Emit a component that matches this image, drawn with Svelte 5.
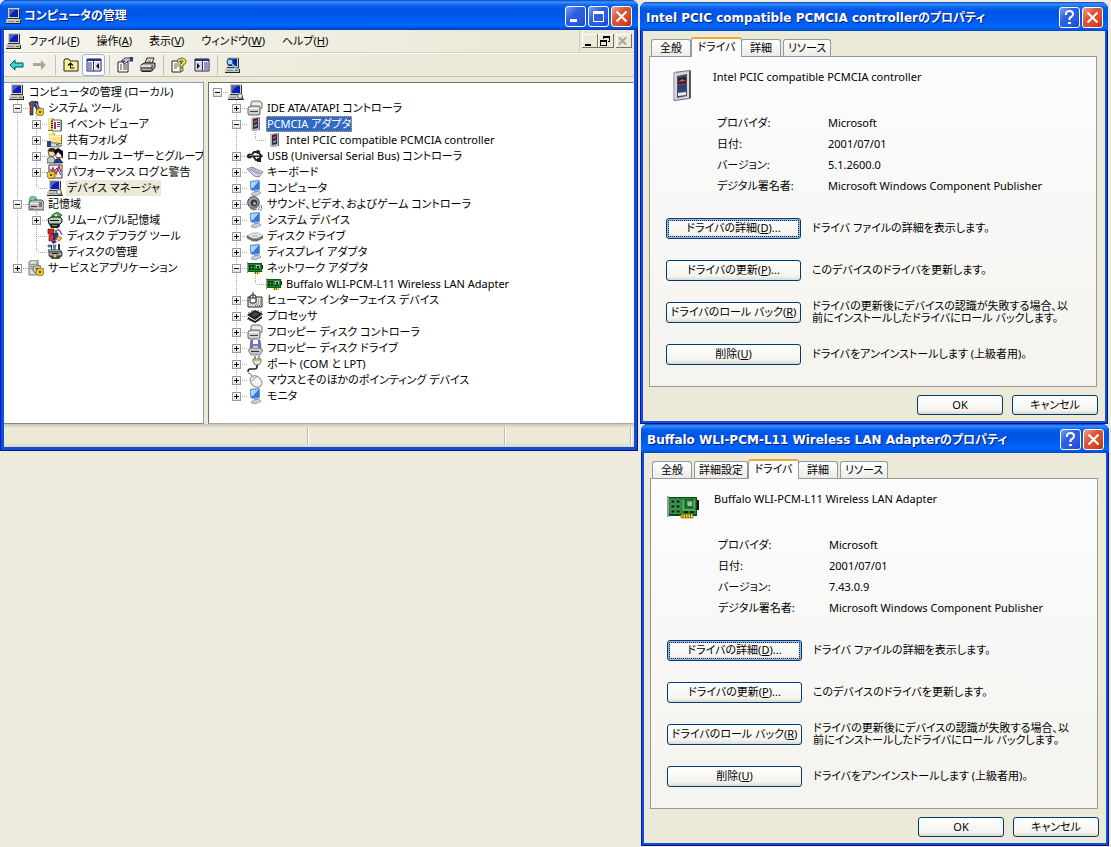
<script>
  // 16x16 glyphs, keyed by name
  const monitor = (x = 0) =>
    `<g transform="translate(${x} 0)"><path d="M2 0h11l1 1v9H2z" fill="#d4d0c8"/><path d="M13 1h1v9h-1z" fill="#333"/><path d="M3 1h9v8H3z" fill="#777"/><path d="M4 2h8v7H4z" fill="#0a1fb4"/><path d="M4 2h5L4 7z" fill="#3c62e8"/><path d="M2 10h12v1H2z" fill="#333"/><path d="M1 11h13l1 1v4H0v-4z" fill="#c9c6bc"/><path d="M0 15h15v1H0zM14 12h1v4h-1z" fill="#222"/><path d="M2 13h6v1H2z" fill="#888"/><path d="M10 13h3v1h-3z" fill="#18a018"/></g>`;
  const gear = (x, y, c = '#f2cf2f') =>
    `<g transform="translate(${x} ${y})"><path d="M3 0h2v1h1l1-1 1 2-1 1v1h1v2H7l-1 2-2-1-2 1-1-2H0V4l1-1-1-1 1-1h2z" fill="${c}" stroke="#5a4a00" stroke-width=".6"/><circle cx="4" cy="4" r="1.2" fill="#5a4a00"/></g>`;
  const folder =
    '<path d="M1 2h5l1 2h8v11H1z" fill="#8a7420"/><path d="M1 2h4l1 2h8v10H1z" fill="#f8e387"/><path d="M2 5h12v1H2z" fill="#fff8c8"/>';
  const blueMon =
    '<path d="M3 1l9-1 1 1v9L5 11 3 9z" fill="#7c8fb0"/><path d="M4 2l8-1v8l-7 1z" fill="#2a7de0"/><path d="M4 2l8-1-6 7H4z" fill="#9ed8ff"/><path d="M7 11l4-1v3H7z" fill="#9aa6c0"/><path d="M4 14l3-2 5-1 2 2-3 2-5 1z" fill="#c6cddc" stroke="#6c7894" stroke-width=".6"/>';
  const card =
    '<path d="M5 2l8-1v13l-8 1z" fill="#6d7076"/><path d="M4 2l2-1v13l-2 1z" fill="#c8cad0"/><path d="M5 2l7-1v13l-7 1z" fill="#b0b4be"/><path d="M6 3l5-1v10l-5 1z" fill="#2c2c40"/><path d="M7 5l3-1v2l-3 1z" fill="#e0402c"/><path d="M7 9l3-1v2l-3 1z" fill="#8a90b8"/>';
  const drives =
    '<path d="M4 3l1-2h8l2 2v5l-2 1H4z" fill="#dedede" stroke="#666" stroke-width=".9"/><path d="M5 4h9" stroke="#fff"/><path d="M1 8l2-2h9l1 2v6l-1 1H2l-1-1z" fill="#cfcfcf" stroke="#555" stroke-width=".9"/><path d="M2 8h10v1H2z" fill="#fff"/><path d="M3 11h8v1H3z" fill="#444"/>';
  const nic =
    '<path d="M0 3h15v9H0z" fill="#0b5a1c"/><path d="M1 4h13v7H1z" fill="#1f8a34"/><path d="M2 5h2v2H2zM5 5h2v2H5zM2 8h2v2H2zM5 8h2v2H5z" fill="#032a0a"/><path d="M9 5h4v3H9z" fill="#8fc79a"/><path d="M10 6h2v2h-2zM8 9h5v1H8z" fill="#032a0a"/><path d="M0 2h1v11H0z" fill="#9a9a9a"/><path d="M7 12h6v2H7z" fill="#f0d83c"/><path d="M8 12h1v2H8zM10 12h1v2h-1z" fill="#7a6400"/><path d="M15 5h1v4h-1z" fill="#222"/>';

  const icons = {
    computer: monitor(),
    computerScan: monitor() + '<circle cx="12" cy="12" r="2.4" fill="#dff3ff" stroke="#666"/><path d="M14 14l2 2" stroke="#555" stroke-width="1.4"/>',
    tools:
      '<path d="M1 3l3-2 3 1-1 2 1 2-2 1v8H2V6z" fill="#555" stroke="#111" stroke-width=".6"/><path d="M3 5h1v9H3z" fill="#c33"/><path d="M7 1l3 1v3l4 8-3 2-4-9z" fill="#2e3a78" stroke="#111" stroke-width=".6"/><path d="M8 3l4 9" stroke="#8fb4f0"/>' + gear(8, 8),
    event:
      folder + '<path d="M5 4h9v11H5z" fill="#fff" stroke="#444" stroke-width=".8"/><path d="M4 5h2v1H4zM4 7h2v1H4zM4 9h2v1H4zM4 11h2v1H4z" fill="#333"/><path d="M7 6h2v7H7z" fill="#d62828"/><path d="M10 6h3v1h-3zM10 8h3v1h-3zM10 10h3v1h-3z" fill="#3448c4"/>',
    share:
      '<path d="M2 1h5l1 2h7v9H2z" fill="#8a7420"/><path d="M2 1h4l1 2h7v8H2z" fill="#f8e387"/><path d="M3 4h11v1H3z" fill="#fff8c8"/><path d="M0 10h3l3 1h5l1 1-3 1h6l-2 2H5l-2-1H0z" fill="#d8d4c8" stroke="#333" stroke-width=".6"/><path d="M0 9h4v6H0z" fill="#1a44a0"/>',
    users:
      '<path d="M1 2l3-2 4 1v5L6 9 2 8z" fill="#f0d9a0" stroke="#222" stroke-width=".7"/><path d="M1 3l2-3 5 1-1 2-3 1z" fill="#3a2a12"/><path d="M0 15V11l4-3 4 3v4z" fill="#b9cdb8" stroke="#222" stroke-width=".7"/><path d="M8 3l4-2 3 3v5l-3 2-3-2z" fill="#fff" stroke="#111" stroke-width=".7"/><path d="M6 3l5-3 5 3v8l-2-4-3-3-2 3z" fill="#0b0b14"/><path d="M7 15l2-4h4l3 4z" fill="#1f3da8" stroke="#111" stroke-width=".6"/><path d="M10 9h3v1h-3z" fill="#d22"/>',
    perf:
      '<path d="M2 1h13v13H2z" fill="#fff" stroke="#333"/><path d="M2 4h13M2 7h13M2 10h13M6 1v13M10 1v13" stroke="#c4c4c4" stroke-width=".6"/><path d="M3 11l3-7 3 6 3-8 2 6" fill="none" stroke="#d42020" stroke-width="1.3"/><path d="M3 5l4 3 3-4 4 7" fill="none" stroke="#2338b8"/>' + gear(0, 7),
    storage:
      '<circle cx="5" cy="4" r="3.8" fill="#6fd08a" stroke="#4b6"/><circle cx="5" cy="4" r="1.2" fill="#fff"/><path d="M1 6l3-2h10l2 2v8H1z" fill="#bfbfbf" stroke="#333" stroke-width=".8"/><path d="M2 7h12v1H2z" fill="#eee"/><path d="M3 10h6v1H3z" fill="#333"/><path d="M11 6h3v5h-3z" fill="#777"/><path d="M3 12h2v1H3z" fill="#1b1"/>',
    removable:
      '<path d="M5 3l5-3 5 3-4 4H5z" fill="#3fae58" stroke="#143" stroke-width=".7"/><circle cx="9" cy="3.6" r="1.3" fill="#e8f7a8"/><path d="M1 7l3-2h9l2 2v3l-2 2H2z" fill="#b8c8b8" stroke="#111"/><path d="M3 8h9v1H3z" fill="#111"/><path d="M2 12h11v2l-2 2H4z" fill="#222"/><path d="M5 13h5v1H5z" fill="#48c060"/>',
    defrag:
      '<path d="M1 1h6v5H1z" fill="#d42828" stroke="#400" stroke-width=".6"/><path d="M8 2h2v4H8z" fill="#28a83c"/><path d="M10 1l3 2 2 4" fill="none" stroke="#b048c8" stroke-width="1.6"/><path d="M2 7l5-1v6l-5 1z" fill="#e03434" stroke="#400" stroke-width=".6"/><path d="M7 6l4-1v5l-4 2z" fill="#2540c8" stroke="#004" stroke-width=".6"/><path d="M11 8l4 2-3 3-3-2z" fill="#f0c428" stroke="#540" stroke-width=".6"/><path d="M4 13l4-1 2 2-4 2z" fill="#6a1a78"/>',
    disk:
      '<path d="M4 1h1v5H4zM11 0h2v6h-2z" fill="#333"/><path d="M1 1h3v2H1zM6 1h3l-1 5H7z" fill="#4aa6d8" stroke="#224" stroke-width=".5"/><path d="M1 6h12l2 2H2z" fill="#eee" stroke="#222" stroke-width=".8"/><path d="M2 8h13v4H2z" fill="#a8a8a8" stroke="#222" stroke-width=".8"/><path d="M5 9h6v1H5z" fill="#222"/><path d="M2 12l3 3h7l3-3z" fill="#444"/><circle cx="8" cy="12" r="1.5" fill="#d8c838"/>',
    services:
      '<path d="M1 2l3-2h6v13l-2 2H1z" fill="#dcd9cf" stroke="#555" stroke-width=".8"/><path d="M2 4h5v1H2zM2 6h5v1H2zM2 8h5v1H2z" fill="#888"/><path d="M8 2l2-2v13l-2 2z" fill="#a7a498"/>' + gear(5, 5, '#c9c9c9') + gear(8, 8),
    drives,
    card,
    usb: '<path d="M1 8h12M4 8l3-4h4M6 8l3 4h2" fill="none" stroke="#222" stroke-width="2"/><circle cx="2.5" cy="8" r="2.5" fill="#222"/><path d="M12 4l4 4-4 4z" fill="#222"/><circle cx="11" cy="4" r="2" fill="#222"/><path d="M10 10h4v4h-4z" fill="#222"/><path d="M2 7.5h11" stroke="#aaa" stroke-width=".7"/>',
    keyboard:
      '<path d="M0 5l5-2 11 5-4 5-5-1z" fill="#d9d9ea" stroke="#6c6c8c" stroke-width=".8"/><path d="M2 5l10 5M4 4.500l10 5M3 7l4-3M5.500 8.500l4-3M8 10l4-3M10.500 11l3-3" stroke="#8888a8" stroke-width=".7"/>',
    blueMon,
    sound:
      '<circle cx="6.500" cy="6.500" r="5.800" fill="#a4a4a8" stroke="#333"/><circle cx="7" cy="7" r="3.400" fill="#3a3a3e"/><circle cx="7.500" cy="7.500" r="1.300" fill="#c8c8cc"/><path d="M12 10q1 2-1 4M14 9q2 4-1 6" fill="none" stroke="#4a7ad8"/><path d="M3 12l4 2 3-1" fill="none" stroke="#666"/>',
    hdd: '<path d="M0 8l6-3h5l5 3-6 3H6z" fill="#f0f0f0" stroke="#888" stroke-width=".7"/><path d="M0 8l6 3h4l6-3v2l-6 3H6l-6-3z" fill="#77777b" stroke="#555" stroke-width=".7"/><ellipse cx="8" cy="8" rx="3.500" ry="1.300" fill="#c4c4c8"/><path d="M12 10h2v1h-2z" fill="#2c2"/>',
    nic,
    hid: '<path d="M1 5h14v10H1z" fill="#e8e4d8" stroke="#222"/><path d="M7 8h7M7 10h7M3 12h11M8 13.500h5" stroke="#555" stroke-width=".9" stroke-dasharray="1 1"/><path d="M4 3h4l1 2v5l-1 1H4l-1-1V5z" fill="#fff" stroke="#222"/><path d="M6 0v6M3 6h6" stroke="#222" fill="none"/>',
    cpu: '<path d="M0 7l8-5 8 4-8 6z" fill="#222"/><path d="M1 9l7 4 7-5v2l-7 5-7-4z" fill="#111"/><path d="M4 7l4-3 4 2-4 3z" fill="#4a4a4e"/><path d="M1 10v2M3 11v2M5 12v2M10 12v2M12 11v2M14 9v2M2 4v2M5 2v2M11 2v2M14 3v2" stroke="#333" stroke-width=".9"/>',
    floppy:
      '<path d="M4 0h9l1 9H3z" fill="#6a78c0" stroke="#334" stroke-width=".6"/><path d="M6 0h5v4H6z" fill="#fff"/><path d="M6 6h5v3H6z" fill="#dde"/><path d="M1 10l3-2h9l3 2-3 5H4z" fill="#c4c4cc" stroke="#666" stroke-width=".7"/><path d="M4 11h8v1H4z" fill="#333"/>',
    port: '<path d="M8 0v3M12 0v3" stroke="#333"/><path d="M6 3h8v3l-2 3H8L6 6z" fill="#e4e4dc" stroke="#555" stroke-width=".8"/><path d="M10 9v2q0 2-3 2H3q-2 0-2 3" fill="none" stroke="#222" stroke-width="1.500"/><path d="M7 4h6v1H7z" fill="#d8c820"/>',
    mouse:
      '<path d="M1 1q3 0 4 3" fill="none" stroke="#777"/><ellipse cx="9" cy="9.500" rx="6.500" ry="5" fill="#f4f4f4" stroke="#888" transform="rotate(40 9 9.500)"/><path d="M4 9q4-1 6-5M7 6l-2-2" fill="none" stroke="#999"/>',
    back: '<path d="M1 8l5-5v3h8v4H6v3z" fill="#2fdcdc" stroke="#04484c"/>',
    forward: '<path d="M14 8L9 3v3H1v3h8v4z" fill="#aca899"/>',
    up: '<path d="M1 3l1-1h4l1 2h8v10H1z" fill="#fbf39a" stroke="#222"/><path d="M7.500 6v5h4M5 8.500L7.500 6 10 8.500" fill="none" stroke="#111" stroke-width="1.200"/>',
    treePane:
      '<path d="M1 2h14v12H1z" fill="#fff" stroke="#1a1a50"/><path d="M1 2h14v2H1z" fill="#2b2b80"/><path d="M2 6h4M2 8h4M2 10h4M2 12h4" stroke="#2b2b80"/><path d="M7 4h1v10H7z" fill="#2b2b80"/><path d="M9 5h5v8H9z" fill="#d8d8e8"/><path d="M13 6v6l-3-3z" fill="#111"/>',
    props:
      '<path d="M1 5h10v10H1z" fill="#fff" stroke="#222"/><path d="M3 8h2M6 8h4M3 10h2M6 10h4M3 12h2M6 12h4" stroke="#444"/><path d="M4 4l4-3 5 0 0-1h3v4h-3l-2 0-3 3-2-1 2-2-2 0z" fill="#c4c8d8" stroke="#222" stroke-width=".8"/><path d="M13 0h3v4h-3z" fill="#2b3c90"/>',
    print:
      '<path d="M5 6l2-5h7l-2 5z" fill="#fff" stroke="#222"/><path d="M7.500 3h4M7 4.500h4" stroke="#777" stroke-width=".8"/><path d="M1 8l3-2h11v4l-3 4H1z" fill="#aaa" stroke="#222"/><path d="M1 8h11v2H1z" fill="#ddd"/><path d="M2 11h10M12 8v5" stroke="#333"/><path d="M2 14h9v1H2z" fill="#222"/>',
    help: '<path d="M1 4h9v11H1z" fill="#fff" stroke="#222"/><path d="M3 7h5M3 9h5M3 11h3" stroke="#666"/><path d="M6 5Q6 1 10 1q5 0 5 4 0 2-3 3v2H9V7q3-1 3-2.500Q12 3 10.500 3 9 3 9 5z" fill="#f7ec32" stroke="#444" stroke-width=".8"/><path d="M9 11h3v3H9z" fill="#f7ec32" stroke="#444" stroke-width=".8"/>',
    pane: '<path d="M1 2h14v12H1z" fill="#fff" stroke="#1a1a50"/><path d="M1 2h14v2H1z" fill="#2b2b80"/><path d="M2 5h6v8H2z" fill="#d8d8e8"/><path d="M3 6v6l3-3z" fill="#111"/><path d="M8 4h1v10H8z" fill="#2b2b80"/><path d="M10 6h4M10 8h4M10 10h4M10 12h4" stroke="#2b2b80"/>',
    refresh:
      monitor() + '<circle cx="5" cy="5" r="3" fill="#8fe0f4" stroke="#235"/><path d="M7 7l6 6" stroke="#5cc4e4" stroke-width="2"/>'
  };

  // 32x32 pictures of the device pages
  const art = {
    card: '<path d="M8 3l16-2 1 1v27l-2 1L9 32l-2-1V5z" fill="#6b6e75"/><path d="M7 4l3-1v27l-3 1z" fill="#b9bcc4"/><path d="M9 4l14-2v27L9 31z" fill="#d3d6dc"/><path d="M11 7l10-2v22l-10 2z" fill="#4c4c66"/><path d="M12 9l8-1v6l-8 1z" fill="#231f2c"/><path d="M12 13l4-3 4 2z" fill="#f2543a"/><path d="M12 16l8-1v7l-8 1z" fill="#34406e"/><path d="M12 24l8-1v3l-8 1z" fill="#eceef6"/><path d="M23 2h2v27l-2 1z" fill="#55575c"/>',
    nic: '<path d="M1 6h29v19H1z" fill="#0a4a16"/><path d="M2 7h27v16H2z" fill="#1f8434"/><path d="M0 5h2v21H0z" fill="#9c9c9c"/><path d="M4 9h4v3H4zM9 9h4v3H9zM4 14h4v3H4zM9 14h4v3H9zM4 19h4v3H4zM9 19h4v3H9z" fill="#06200a" stroke="#7fbf8a" stroke-width=".6"/><path d="M19 9h7v7h-7z" fill="#5aa068" stroke="#0a3a14"/><path d="M21 11h4v4h-4z" fill="#a9b8ac"/><path d="M16 9v10M27 9v8M16 19h12" stroke="#84cf90"/><path d="M17 20h4v2h-4zM23 20h4v2h-4z" fill="#06200a"/><path d="M30 9h2v10h-2z" fill="#111"/><path d="M14 23h12v4H14z" fill="#f4dc3c" stroke="#6a5800" stroke-width=".6"/><path d="M16 23v4M18.500 23v4M21 23v4M23.500 23v4" stroke="#6a5800"/>'
  };

  // rails: one entry per ancestor column, 1 where a connecting line passes, 0 where it is blank
  const consoleTree = [
    { label: 'コンピュータの管理 (ローカル)', icon: 'computer', root: true },
    { label: 'システム ツール', icon: 'tools', rails: [], mark: '-' },
    { label: 'イベント ビューア', icon: 'event', rails: [1], mark: '+' },
    { label: '共有フォルダ', icon: 'share', rails: [1], mark: '+' },
    { label: 'ローカル ユーザーとグループ', icon: 'users', rails: [1], mark: '+' },
    { label: 'パフォーマンス ログと警告', icon: 'perf', rails: [1], mark: '+' },
    { label: 'デバイス マネージャ', icon: 'computerScan', rails: [1], last: true, state: 'dim' },
    { label: '記憶域', icon: 'storage', rails: [], mark: '-' },
    { label: 'リムーバブル記憶域', icon: 'removable', rails: [1], mark: '+' },
    { label: 'ディスク デフラグ ツール', icon: 'defrag', rails: [1] },
    { label: 'ディスクの管理', icon: 'disk', rails: [1], last: true },
    { label: 'サービスとアプリケーション', icon: 'services', rails: [], mark: '+', last: true }
  ];

  const deviceTree = [
    { label: '', icon: 'computerScan', rails: [], mark: '-', only: true },
    { label: 'IDE ATA/ATAPI コントローラ', icon: 'drives', rails: [0], mark: '+' },
    { label: 'PCMCIA アダプタ', icon: 'card', rails: [0], mark: '-', state: 'selected' },
    { label: 'Intel PCIC compatible PCMCIA controller', icon: 'card', rails: [0, 1], last: true },
    { label: 'USB (Universal Serial Bus) コントローラ', icon: 'usb', rails: [0], mark: '+' },
    { label: 'キーボード', icon: 'keyboard', rails: [0], mark: '+' },
    { label: 'コンピュータ', icon: 'blueMon', rails: [0], mark: '+' },
    { label: 'サウンド、ビデオ、およびゲーム コントローラ', icon: 'sound', rails: [0], mark: '+' },
    { label: 'システム デバイス', icon: 'blueMon', rails: [0], mark: '+' },
    { label: 'ディスク ドライブ', icon: 'hdd', rails: [0], mark: '+' },
    { label: 'ディスプレイ アダプタ', icon: 'blueMon', rails: [0], mark: '+' },
    { label: 'ネットワーク アダプタ', icon: 'nic', rails: [0], mark: '-' },
    { label: 'Buffalo WLI-PCM-L11 Wireless LAN Adapter', icon: 'nic', rails: [0, 1], last: true },
    { label: 'ヒューマン インターフェイス デバイス', icon: 'hid', rails: [0], mark: '+' },
    { label: 'プロセッサ', icon: 'cpu', rails: [0], mark: '+' },
    { label: 'フロッピー ディスク コントローラ', icon: 'drives', rails: [0], mark: '+' },
    { label: 'フロッピー ディスク ドライブ', icon: 'floppy', rails: [0], mark: '+' },
    { label: 'ポート (COM と LPT)', icon: 'port', rails: [0], mark: '+' },
    { label: 'マウスとそのほかのポインティング デバイス', icon: 'mouse', rails: [0], mark: '+' },
    { label: 'モニタ', icon: 'blueMon', rails: [0], mark: '+', last: true }
  ];

  const menus = [
    ['ファイル', 'F'],
    ['操作', 'A'],
    ['表示', 'V'],
    ['ウィンドウ', 'W'],
    ['ヘルプ', 'H']
  ];

  const tools = [
    { icon: 'back', name: '戻る' },
    { icon: 'forward', name: '進む', off: true },
    null,
    { icon: 'up', name: '1 つ上のレベルへ' },
    { icon: 'treePane', name: 'コンソール ツリーの表示/非表示', on: true },
    null,
    { icon: 'props', name: 'プロパティ' },
    { icon: 'print', name: '印刷' },
    null,
    { icon: 'help', name: 'ヘルプ' },
    { icon: 'pane', name: '操作ウィンドウの表示/非表示' },
    null,
    { icon: 'refresh', name: 'ハードウェア変更のスキャン' }
  ];

  const actions = [
    { text: 'ドライバの詳細', key: 'D', more: '...', note: 'ドライバ ファイルの詳細を表示します。', focus: true },
    { text: 'ドライバの更新', key: 'P', more: '...', note: 'このデバイスのドライバを更新します。' },
    { text: 'ドライバのロール バック', key: 'R', more: '', note: 'ドライバの更新後にデバイスの認識が失敗する場合、以前にインストールしたドライバにロール バックします。' },
    { text: '削除', key: 'U', more: '', note: 'ドライバをアンインストールします (上級者用)。' }
  ];

  const dialogs = [
    { device: 'Intel PCIC compatible PCMCIA controller', art: 'card', version: '5.1.2600.0', tabs: ['全般', 'ドライバ', '詳細', 'リソース'] },
    { device: 'Buffalo WLI-PCM-L11 Wireless LAN Adapter', art: 'nic', version: '7.43.0.9', tabs: ['全般', '詳細設定', 'ドライバ', '詳細', 'リソース'] }
  ];
</script>

{#snippet icon(name)}
  <svg class="icon" viewBox="0 0 16 16" aria-hidden="true">{@html icons[name]}</svg>
{/snippet}

{#snippet accel(text, key, more = '')}{text}(<u>{key}</u>){more}{/snippet}

{#snippet caption(kind)}
  <button class="cap {kind}" aria-label={kind}>
    <svg viewBox="0 0 19 19" aria-hidden="true">
      {#if kind === 'minimize'}
        <path d="M4 12h7v3H4z" fill="#fff" />
      {:else if kind === 'maximize'}
        <path d="M4 4h11v11H4zM5 7v7h9V7z" fill="#fff" fill-rule="evenodd" />
      {:else if kind === 'help'}
        <path d="M6 7V6q0-3 3.500-3T13 6q0 2-2 3t-1.500 3" fill="none" stroke="#fff" stroke-width="2" />
        <path d="M8 14h3v2H8z" fill="#fff" />
      {:else}
        <path d="M4.500 4.500l10 10M14.500 4.500l-10 10" stroke="#fff" stroke-width="2.200" />
      {/if}
    </svg>
  </button>
{/snippet}

{#snippet tree(rows, label)}
  <ul class="tree" role="tree" aria-label={label}>
    {#each rows as row}
      <li role="treeitem" aria-selected={!!row.state}>
        {#if !row.root}
          {#each row.rails as rail}
            <span class="cell" class:rail={rail === 1}></span>
          {/each}
          <span class="cell branch" class:last={row.last} class:only={row.only}>
            {#if row.mark}
              <button class="mark" class:plus={row.mark === '+'} aria-label={row.mark === '+' ? '展開' : '折りたたみ'}></button>
            {/if}
          </span>
        {/if}
        {@render icon(row.icon)}
        {#if row.label}<span class="label {row.state ?? ''}">{row.label}</span>{/if}
      </li>
    {/each}
  </ul>
{/snippet}

<main class="desktop">
  <section class="window" aria-label="コンピュータの管理">
    <header class="titlebar">
      {@render icon('computer')}
      <h1>コンピュータの管理</h1>
      {@render caption('minimize')}
      {@render caption('maximize')}
      {@render caption('close')}
    </header>

    <div class="client">
      <nav class="menubar">
        {@render icon('computer')}
        {#each menus as [text, key]}
          <button class="menu">{@render accel(text, key)}</button>
        {/each}
        <div class="mdi">
          <button aria-label="最小化"><svg viewBox="0 0 14 13"><path d="M3 9h6v2H3z" fill="#000" /></svg></button>
          <button aria-label="元に戻す"><svg viewBox="0 0 14 13"><path d="M5 1h7v6h-2V6h1V3H6v1H5zM2 5h7v6H2zM3 7v3h5V7z" fill="#000" fill-rule="evenodd" /></svg></button>
          <button class="apart" aria-label="閉じる"><svg viewBox="0 0 14 13"><path d="M3 2.500l7 7M10 2.500l-7 7" stroke="#aca899" stroke-width="2" /></svg></button>
        </div>
      </nav>

      <div class="toolbar" role="toolbar">
        {#each tools as tool}
          {#if tool}
            <button class="tool" class:on={tool.on} disabled={tool.off} aria-label={tool.name}>{@render icon(tool.icon)}</button>
          {:else}
            <span class="sep"></span>
          {/if}
        {/each}
      </div>

      <div class="panes">
        <div class="pane side">{@render tree(consoleTree, 'コンソール')}</div>
        <div class="pane sunken">{@render tree(deviceTree, 'デバイス')}</div>
      </div>

      <footer class="status"><span class="wide"></span><span class="mid"></span><span class="small"></span></footer>
    </div>
  </section>

  <div class="stack">
    {#each dialogs as dialog}
      <section class="dialog" aria-label={dialog.device}>
        <header class="titlebar">
          <h2>{dialog.device}のプロパティ</h2>
          {@render caption('help')}
          {@render caption('close')}
        </header>
        <div class="body">
          <div class="tabs" role="tablist">
            {#each dialog.tabs as tab}
              <button class="tab" role="tab" aria-selected={tab === 'ドライバ'}>{tab}</button>
            {/each}
          </div>
          <div class="sheet" role="tabpanel">
            <div class="device">
              <svg class="art" viewBox="0 0 32 32" aria-hidden="true">{@html art[dialog.art]}</svg>
              <span>{dialog.device}</span>
            </div>
            <dl>
              <dt>プロバイダ:</dt><dd>Microsoft</dd>
              <dt>日付:</dt><dd>2001/07/01</dd>
              <dt>バージョン:</dt><dd>{dialog.version}</dd>
              <dt>デジタル署名者:</dt><dd>Microsoft Windows Component Publisher</dd>
            </dl>
            <div class="actions">
              {#each actions as action}
                <button class="push" class:focus={action.focus}>{@render accel(action.text, action.key, action.more)}</button>
                <p>{action.note}</p>
              {/each}
            </div>
          </div>
          <div class="confirm">
            <button class="push">OK</button>
            <button class="push">キャンセル</button>
          </div>
        </div>
      </section>
    {/each}
  </div>
</main>

<style>
  :global(body) {
    margin: 0;
    background: #efebdc;
  }
  .desktop {
    display: grid;
    grid-template-columns: minmax(0, 1fr) 469px;
    gap: 2px;
    align-items: start;
    padding-right: 2px;
    font: 11px/16px 'Noto Sans', 'Noto Sans CJK JP', sans-serif;
    font-feature-settings: 'palt';
    color: #000;
  }
  button {
    margin: 0;
    padding: 0;
    border: 0;
    background: none;
    font: inherit;
    font-feature-settings: inherit;
    color: inherit;
    white-space: nowrap;
  }
  svg {
    display: block;
  }
  .icon {
    flex: none;
    width: 16px;
    height: 16px;
  }

  .titlebar {
    display: flex;
    align-items: center;
    gap: 2px;
    box-sizing: border-box;
    height: 30px;
    padding: 2px 6px 0 6px;
    border-radius: 7px 7px 0 0;
    background: linear-gradient(#0842b8 0, #3b92ff 2px, #0a66f0 5px, #0054e3 9px, #0058ea 16px, #0066ff 25px, #0050d8 28px, #0038b0 30px);
    color: #fff;
    text-shadow: 1px 1px #0a1e6e;
  }
  .titlebar h1,
  .titlebar h2 {
    flex: 1;
    margin: 0;
    overflow: hidden;
    white-space: nowrap;
    font-family: 'DejaVu Sans', 'Noto Sans CJK JP', sans-serif;
    font-size: 12px;
    line-height: 18px;
    font-weight: bold;
  }
  .cap {
    flex: none;
    box-sizing: border-box;
    width: 21px;
    height: 21px;
    border: 1px solid #fff;
    border-radius: 3px;
    background: linear-gradient(135deg, #7a9ff2, #2e5ee0 40%, #2a5be8 70%, #1c45c4);
  }
  .cap.close {
    background: linear-gradient(135deg, #f0a08a, #dd5433 40%, #d8492a 70%, #b5300f);
  }

  .window,
  .dialog {
    background: #0f4fd8;
    border-radius: 7px 7px 0 0;
  }
  .client {
    margin: 0 4px;
    background: #ece9d8;
  }
  .window {
    padding-bottom: 4px;
    box-shadow: inset 1px 0 #0019cf, inset -1px -1px #00138c;
  }
  .menubar {
    display: flex;
    align-items: center;
    height: 22px;
    padding-left: 2px;
    background: linear-gradient(90deg, #f6f5ee, #ece9d8 80%);
    border-bottom: 1px solid #d4d0bf;
  }
  .menu {
    margin-right: 9px;
    padding: 0 4px;
  }
  .icon + .menu {
    margin-left: 3px;
  }
  .mdi {
    display: flex;
    align-items: center;
    align-self: stretch;
    margin-left: auto;
    padding: 0 2px;
    border-left: 1px solid #d0ccbb;
  }
  .mdi button {
    width: 16px;
    height: 14px;
    background: #ece9d8;
    box-shadow: inset -1px -1px #716f64, inset 1px 1px #fff;
  }
  .mdi .apart {
    margin-left: 2px;
  }
  .mdi svg {
    width: 14px;
    height: 13px;
  }
  .toolbar {
    display: flex;
    align-items: center;
    height: 22px;
    padding-left: 1px;
    border-top: 1px solid #fff;
    border-bottom: 1px solid #c8c4b2;
    background: linear-gradient(90deg, #f4f3ec, #ece9d8 60%);
  }
  .tool {
    display: grid;
    place-items: center;
    width: 23px;
    height: 22px;
  }
  .tool.on {
    box-sizing: border-box;
    border: 1px solid #98b5e2;
    border-radius: 3px;
    background: #fff;
  }
  .sep {
    width: 1px;
    height: 20px;
    margin: 0 3px 0 4px;
    background: #c5c2b2;
  }
  .panes {
    display: grid;
    grid-template-columns: 200px minmax(0, 1fr);
    gap: 4px;
    padding-top: 5px;
  }
  .pane {
    overflow: hidden;
    background: #fff;
    border: 1px solid #7f9db9;
    border-bottom-color: #85898c;
  }
  .side {
    padding-left: 5px;
    border-left: 0;
  }
  .sunken {
    border-color: #716f64 #f4f2e8 #aca899 #716f64;
  }

  .tree {
    margin: 0;
    padding: 1px 0 19px;
    list-style: none;
  }
  .tree li {
    display: flex;
    align-items: center;
    height: 16px;
  }
  .cell {
    flex: none;
    display: grid;
    align-items: center;
    box-sizing: border-box;
    width: 19px;
    height: 16px;
    padding-left: 4px;
    --dots: repeating-linear-gradient(#aca899 0 1px, transparent 1px 2px);
    --dash: repeating-linear-gradient(90deg, #aca899 0 1px, transparent 1px 2px);
  }
  .rail {
    background: var(--dots) 8px 0 / 1px 100% no-repeat;
  }
  .branch {
    background: var(--dots) 8px 0 / 1px 100% no-repeat, var(--dash) 10px 8px / 9px 1px no-repeat;
  }
  .branch.last {
    background-size: 1px 8px, 9px 1px;
  }
  .branch.only {
    background-size: 0 0, 9px 1px;
  }
  .mark {
    box-sizing: border-box;
    width: 9px;
    height: 9px;
    border: 1px solid #8f9aa5;
    background: linear-gradient(#000, #000) 1px 3px / 5px 1px no-repeat, linear-gradient(#fff, #e4e0d2);
  }
  .mark.plus {
    background: linear-gradient(#000, #000) 1px 3px / 5px 1px no-repeat, linear-gradient(#000, #000) 3px 1px / 1px 5px no-repeat, linear-gradient(#fff, #e4e0d2);
  }
  .label {
    margin-left: 3px;
    padding: 0 1px;
    white-space: nowrap;
  }
  .label.dim {
    background: #ece9d8;
  }
  .label.selected {
    background: #316ac5;
    color: #fff;
    outline: 1px dotted #d8a860;
    outline-offset: -1px;
  }

  .status {
    display: flex;
    height: 23px;
    padding-right: 3px;
    background: linear-gradient(#c9c6b6, #ece9d8 4px, #ece9d8 18px, #dcd9c8);
  }
  .status span {
    margin: 3px 0 2px;
    border-right: 1px solid #c0bdac;
    box-shadow: 1px 0 #fff;
  }
  .wide {
    flex: 304;
  }
  .mid {
    flex: 197;
  }
  .small {
    flex: 126;
  }

  .stack {
    padding-top: 2px;
  }
  .dialog {
    width: 468px;
    padding-bottom: 3px;
    box-shadow: inset 1px 0 #0019cf, inset -1px -1px #00138c;
  }
  .dialog + .dialog {
    margin-left: 1px;
  }
  .dialog .titlebar {
    height: 29px;
    padding-right: 5px;
  }
  .body {
    margin: 0 3px;
    padding: 6px 8px 6px 6px;
    background: #ece9d8;
  }
  .tabs {
    display: flex;
    align-items: flex-end;
    height: 19px;
    padding-left: 2px;
  }
  .tab {
    box-sizing: border-box;
    height: 17px;
    min-width: 40px;
    margin-right: 2px;
    padding: 0 4px;
    border: 1px solid #919b9c;
    border-bottom: 0;
    border-radius: 3px 3px 0 0;
    background: linear-gradient(#fff, #ecebe6);
  }
  .tab[aria-selected='true'] {
    position: relative;
    height: 20px;
    min-width: 51px;
    margin: 0 -1px -1px -2px;
    padding-bottom: 2px;
    border-top: 2px solid #f0a830;
    background: #fcfcfe;
  }
  .sheet {
    padding: 12px 16px 11px;
    border: 1px solid #919b9c;
    background: linear-gradient(#fcfcfe, #f4f3ee);
  }
  .device {
    display: flex;
    gap: 15px;
    height: 32px;
  }
  .art {
    width: 32px;
    height: 32px;
  }
  dl {
    display: grid;
    grid-template-columns: 111px 1fr;
    margin: 11px 0 11px 51px;
    line-height: 21px;
  }
  dd {
    margin: 0;
  }
  .actions {
    display: grid;
    grid-template-columns: 135px 1fr;
    grid-auto-rows: 42px;
    column-gap: 11px;
    align-items: center;
  }
  .actions p {
    margin: 0;
    padding-right: 8px;
    line-height: 12px;
  }
  .push {
    box-sizing: border-box;
    height: 21px;
    border: 1px solid #003c74;
    border-radius: 3px;
    background: linear-gradient(#fff, #f4f3ee 80%, #dcd8cc);
    line-height: 18px;
  }
  .push.focus {
    box-shadow: inset 0 0 0 2px #98b8ea;
    outline: 1px dotted #223;
    outline-offset: -3px;
  }
  .confirm {
    display: flex;
    justify-content: flex-end;
    gap: 9px;
    margin: 8px -1px 0 0;
  }
  .confirm .push {
    width: 86px;
    height: 20px;
  }
</style>
